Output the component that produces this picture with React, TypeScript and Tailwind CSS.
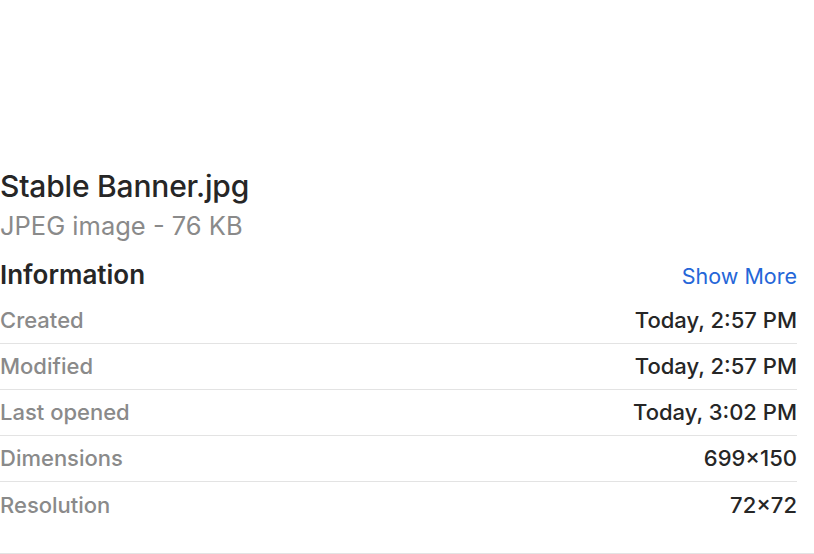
import React from "react";

const rows: [string, string][] = [
  ["Created", "Today, 2:57 PM"],
  ["Modified", "Today, 2:57 PM"],
  ["Last opened", "Today, 3:02 PM"],
  ["Dimensions", "699×150"],
  ["Resolution", "72×72"],
];

export default function App() {
  return (
    <div
      className="w-[814px] h-[554px] bg-white flex flex-col overflow-hidden"
      style={{ fontFamily: "Inter, 'Noto Sans', sans-serif" }}
    >
      <div className="h-[168px] shrink-0" />
      <div className="pr-[17px] flex flex-col">
        <div className="text-[30px] leading-[36px] text-[#262626] font-medium tracking-[-0.2px]">
          Stable Banner.jpg
        </div>
        <div className="text-[25.5px] leading-[32px] text-[#8a8a8a] mt-[6px]">
          JPEG image - 76 KB
        </div>
        <div className="flex items-baseline justify-between h-[56px] pt-[17px] leading-[32px]">
          <span className="text-[26px] font-semibold text-[#262626]">Information</span>
          <span className="text-[21.5px] text-[#2566d8]">Show More</span>
        </div>
        <div className="flex flex-col">
          {rows.map(([k, v], i) => (
            <div
              key={k}
              className={
                "flex items-center justify-between h-[46px] text-[22px] " +
                (i < rows.length - 1 ? "border-b border-[#e3e3e3]" : "")
              }
            >
              <span className="text-[#8a8a8a] font-medium">{k}</span>
              <span className="text-[#262626] font-medium">{v}</span>
            </div>
          ))}
        </div>
      </div>
      <div className="h-[25px] shrink-0" />
      <div className="border-b border-[#e3e3e3]" />
    </div>
  );
}
